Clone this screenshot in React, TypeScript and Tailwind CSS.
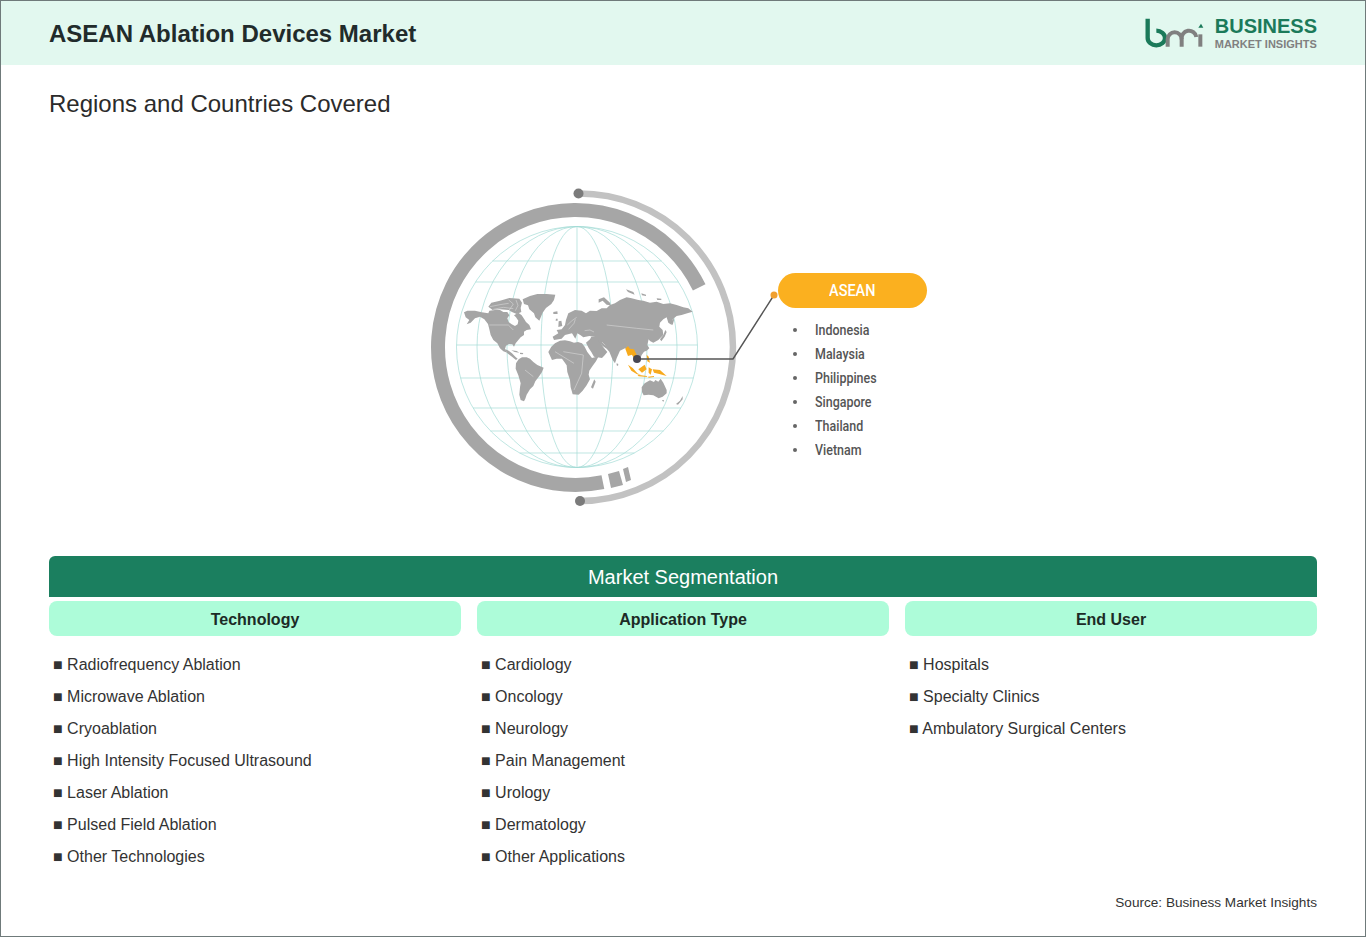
const segments = [
  {
    title: "Technology",
    items: [
      "Radiofrequency Ablation",
      "Microwave Ablation",
      "Cryoablation",
      "High Intensity Focused Ultrasound",
      "Laser Ablation",
      "Pulsed Field Ablation",
      "Other Technologies",
    ],
  },
  {
    title: "Application Type",
    items: ["Cardiology", "Oncology", "Neurology", "Pain Management", "Urology", "Dermatology", "Other Applications"],
  },
  {
    title: "End User",
    items: ["Hospitals", "Specialty Clinics", "Ambulatory Surgical Centers"],
  },
];

const countries = ["Indonesia", "Malaysia", "Philippines", "Singapore", "Thailand", "Vietnam"];

const parallels = [261, 282, 345, 378, 408, 431, 453];

const land = [
  // north america
  "M42 97L52 92L75 92L95 97L115 100L118 92L135 90L150 90L160 96L172 96L178 106L172 115L176 126L185 133L195 138L203 133L205 122L198 112L192 106L205 98L215 106L222 116L228 126L238 135L243 148L230 150L222 155L222 165L212 172L205 180L197 190L192 200L187 193L177 192L168 197L165 207L172 218L160 214L150 205L142 190L130 180L122 165L118 148L114 132L103 118L90 110L75 115L62 128L50 133L58 120L47 112Z",
  // arctic islands
  "M115 80L124 68L150 62L178 54L208 56L216 68L212 84L214 96L200 102L186 96L176 90L150 88L128 90Z",
  // greenland
  "M218 58L240 48L262 42L290 42L316 44L312 60L304 72L288 84L278 98L268 122L256 112L252 100L238 88L234 76L222 72Z",
  // central america and caribbean
  "M165 207L176 212L186 220L196 230L203 236L198 240L186 230L172 220Z",
  "M184 211L200 213L208 218L194 216Z",
  "M210 218L220 219L218 223L210 222Z",
  // south america
  "M198 250L206 238L216 232L230 232L240 236L250 246L262 255L281 263L276 276L268 288L256 304L250 318L240 328L230 344L226 356L222 364L212 360L208 344L210 322L212 310L205 286L197 266Z",
  // africa
  "M295 216L304 200L315 190L330 182L345 181L360 184L372 188L384 186L396 190L404 200L412 216L426 234L446 229L438 244L426 260L418 272L416 284L420 298L410 316L398 332L386 344L368 343L362 322L360 300L352 276L350 256L336 236L320 236L306 240Z",
  "M433 298L437 305L429 326L423 322Z",
  // arabia and levant
  "M408 188L420 178L424 170L445 170L456 196L462 204L472 216L464 226L456 234L432 230L424 216L416 204Z",
  // eurasia
  "M308 170L325 160L320 150L335 148L345 135L348 120L355 100L375 90L395 92L408 100L420 92L440 93L455 85L470 85L480 75L495 70L510 60L530 52L545 55L565 60L580 62L600 68L620 65L640 72L660 70L680 75L700 82L715 85L728 95L712 100L695 105L680 108L668 118L665 135L655 128L650 112L640 118L630 128L628 140L638 150L640 165L625 180L610 188L600 183L596 178L592 195L598 205L590 212L582 215L575 225L570 238L555 230L548 222L540 210L525 205L510 212L500 235L495 250L488 240L478 215L470 206L458 198L448 186L440 172L418 168L400 172L392 166L382 160L376 176L366 160L345 165L335 176L312 180Z",
  // british isles, iceland, japan, sakhalin, arctic russia
  "M326 124L334 122L337 138L325 141Z",
  "M318 116L323 116L323 122L317 122Z",
  "M310 96L322 94L323 102L310 102Z",
  "M630 178L640 165L646 150L650 156L644 170L634 184Z",
  "M664 128L670 112L672 120L668 136Z",
  "M446 58L462 52L480 68L482 76L470 74L458 62L446 68Z",
  "M528 28L550 36L554 44L534 36Z",
  "M574 40L588 44L588 48L576 46Z",
  "M620 55L634 56L634 60L622 60Z",
  // sri lanka
  "M500 250L505 252L504 258L500 256Z",
  // australia
  "M575 322L584 310L600 301L612 306L616 300L625 305L632 296L640 308L650 330L650 340L638 350L626 355L610 346L596 344L581 346L576 336Z",
  "M636 360L642 360L640 366Z",
  // new zealand
  "M678 372L690 362L698 348L698 358L684 374Z",
];

const asean = [
  "M526 206L534 198L540 206L552 208L560 224L572 236L568 246L556 240L550 232L546 224L534 228Z",
  "M534 254L548 264L562 280L574 286L560 282L544 272Z",
  "M565 268L584 254L590 268L576 278Z",
  "M562 284L590 288L592 291L566 289Z",
  "M596 262L606 268L602 284L596 278Z",
  "M590 224L596 230L600 248L592 244Z",
  "M608 268L630 270L650 288L628 282L612 278Z",
  "M594 290L612 288L612 291L596 293Z",
];

// white seas and borders that cut through the land shapes
const cracks = [
  "M120 80L150 74L176 70",
  "M130 88L160 82L190 86",
  "M176 60L190 72L178 90",
  "M198 60L204 76L196 92",
  "M118 135L175 135L190 150",
  "M352 135L366 122L380 112",
  "M356 148L372 130L376 118",
  "M404 152L420 150L432 156",
  "M340 215L400 225L395 280L372 330",
  "M315 215L372 250",
  "M225 270L250 290",
  "M470 135L560 145L610 150",
  "M456 186L466 196",
];

function GlobeDiagram() {
  return (
    <svg viewBox="420 175 358 340" className="w-[358px] h-[340px] shrink-0">
      {/* outer thin ring */}
      <path d="M578.5 193.5A150 150 0 0 1 580 501" fill="none" stroke="#c2c2c2" strokeWidth="6.5" />
      <circle cx="578.5" cy="193.5" r="5" fill="#7b7b7b" />
      <circle cx="580" cy="501" r="5" fill="#7b7b7b" />

      {/* thick ring */}
      <path d="M699.2 287.4A137.5 137.5 0 1 0 602.9 482.2" fill="none" stroke="#a6a6a6" strokeWidth="14" />
      <path d="M608 474L619 471L623 485L611 488Z" fill="#a6a6a6" />
      <path d="M623 469L628 467L631 480L626 482Z" fill="#a6a6a6" />

      {/* grid */}
      <g fill="none" stroke="#a3dbd6" strokeWidth="0.7">
        <circle cx="577" cy="347" r="120.5" />
        <ellipse cx="577" cy="347" rx="100" ry="120.5" />
        <ellipse cx="577" cy="347" rx="70" ry="120.5" />
        <ellipse cx="577" cy="347" rx="36" ry="120.5" />
        <line x1="577" y1="226.5" x2="577" y2="467.5" />
        {parallels.map((y) => {
          const half = 120.5 * Math.sqrt(1 - ((y - 347) / 120.5) ** 2);
          return <line key={y} x1={577 - half} y1={y} x2={577 + half} y2={y} />;
        })}
      </g>

      {/* map */}
      <g transform="translate(450 280) scale(0.3333)">
        {land.map((d) => (
          <path key={d} d={d} fill="#a5a5a5" />
        ))}
        <g fill="none" stroke="#ffffff" strokeWidth="1.5" opacity="0.7">
          {cracks.map((d) => (
            <path key={d} d={d} />
          ))}
        </g>
        {asean.map((d) => (
          <path key={d} d={d} fill="#f7aa1c" />
        ))}
      </g>

      {/* connector */}
      <path d="M637 359H733L774 295" fill="none" stroke="#555555" strokeWidth="1.4" />
      <circle cx="637" cy="359" r="4" fill="#474752" />
      <circle cx="774" cy="295" r="3.5" fill="#f0a030" />
    </svg>
  );
}

function Logo() {
  return (
    <div className="flex items-center gap-[11px]">
      <svg viewBox="78 48 177 99" className="w-[59px] h-[33px]">
        <path d="M86 53V111A26 22 0 1 0 112 89" fill="none" stroke="#1b7a5a" strokeWidth="13" />
        <path d="M146 137V115A21 21 0 0 1 188 115V137" fill="none" stroke="#808080" strokeWidth="12" />
        <path d="M188 115A22 22 0 0 1 232 108" fill="none" stroke="#808080" strokeWidth="12" />
        <path d="M244 100V137" fill="none" stroke="#808080" strokeWidth="12" />
        <path d="M246 68L253 80L238 80Z" fill="#1b7a5a" />
      </svg>
      <div className="flex flex-col">
        <span className="text-[20px] leading-[21px] font-bold text-[#1b7a5a]">BUSINESS</span>
        <span className="text-[11px] leading-[14px] font-bold text-[#808080]">MARKET INSIGHTS</span>
      </div>
    </div>
  );
}

export default function App() {
  return (
    <div className="w-[1366px] h-[937px] bg-white border border-[#6f7a7a] font-['Liberation_Sans',Arial,sans-serif] text-[#2b2b2b]">
      {/* Header */}
      <div className="h-16 bg-[#e2f8ef] px-12 flex items-center justify-between">
        <h1 className="pt-0.5 text-2xl font-bold text-[#212b2b]">ASEAN Ablation Devices Market</h1>
        <Logo />
      </div>

      <div className="px-12">
        <h2 className="pt-[25px] text-2xl leading-7 text-[#2b2b2b]">Regions and Countries Covered</h2>

        {/* Map diagram */}
        <div className="h-[438px] pt-[57px] pl-[371px] flex items-start">
          <GlobeDiagram />
          <div className="mt-[98px] w-[149px]">
            <div className="h-[35px] rounded-full bg-[#fbb01f] flex items-center justify-center">
              <span className="text-[17px] font-medium text-white font-['Roboto',sans-serif] scale-x-[0.85]">ASEAN</span>
            </div>
            <ul className="mt-[10px]">
              {countries.map((c) => (
                <li key={c} className="h-6 flex items-center text-[#555555] font-['Roboto',sans-serif]">
                  <span className="ml-[15px] w-1 h-1 rounded-full bg-[#666666]" />
                  <span className="ml-[18px] text-sm font-medium origin-left scale-x-[0.89]">{c}</span>
                </li>
              ))}
            </ul>
          </div>
        </div>

        {/* Segmentation */}
        <div className="h-[41px] rounded-t-md bg-[#1b7f5f] flex items-center justify-center text-xl text-white">
          Market Segmentation
        </div>
        <div className="mt-1 grid grid-cols-3 gap-4">
          {segments.map((s) => (
            <div key={s.title}>
              <div className="h-[35px] pt-0.5 rounded-lg bg-[#adfcd9] flex items-center justify-center font-bold text-[#1c2b26]">
                {s.title}
              </div>
              <ul className="mt-[13px] pl-1 h-[223px]">
                {s.items.map((item) => (
                  <li key={item} className="h-8 flex items-center text-[#333333]">
                    ■ {item}
                  </li>
                ))}
              </ul>
            </div>
          ))}
        </div>

        <p className="mt-[21px] text-[13.6px] leading-5 text-right text-[#333333]">Source: Business Market Insights</p>
      </div>
    </div>
  );
}
